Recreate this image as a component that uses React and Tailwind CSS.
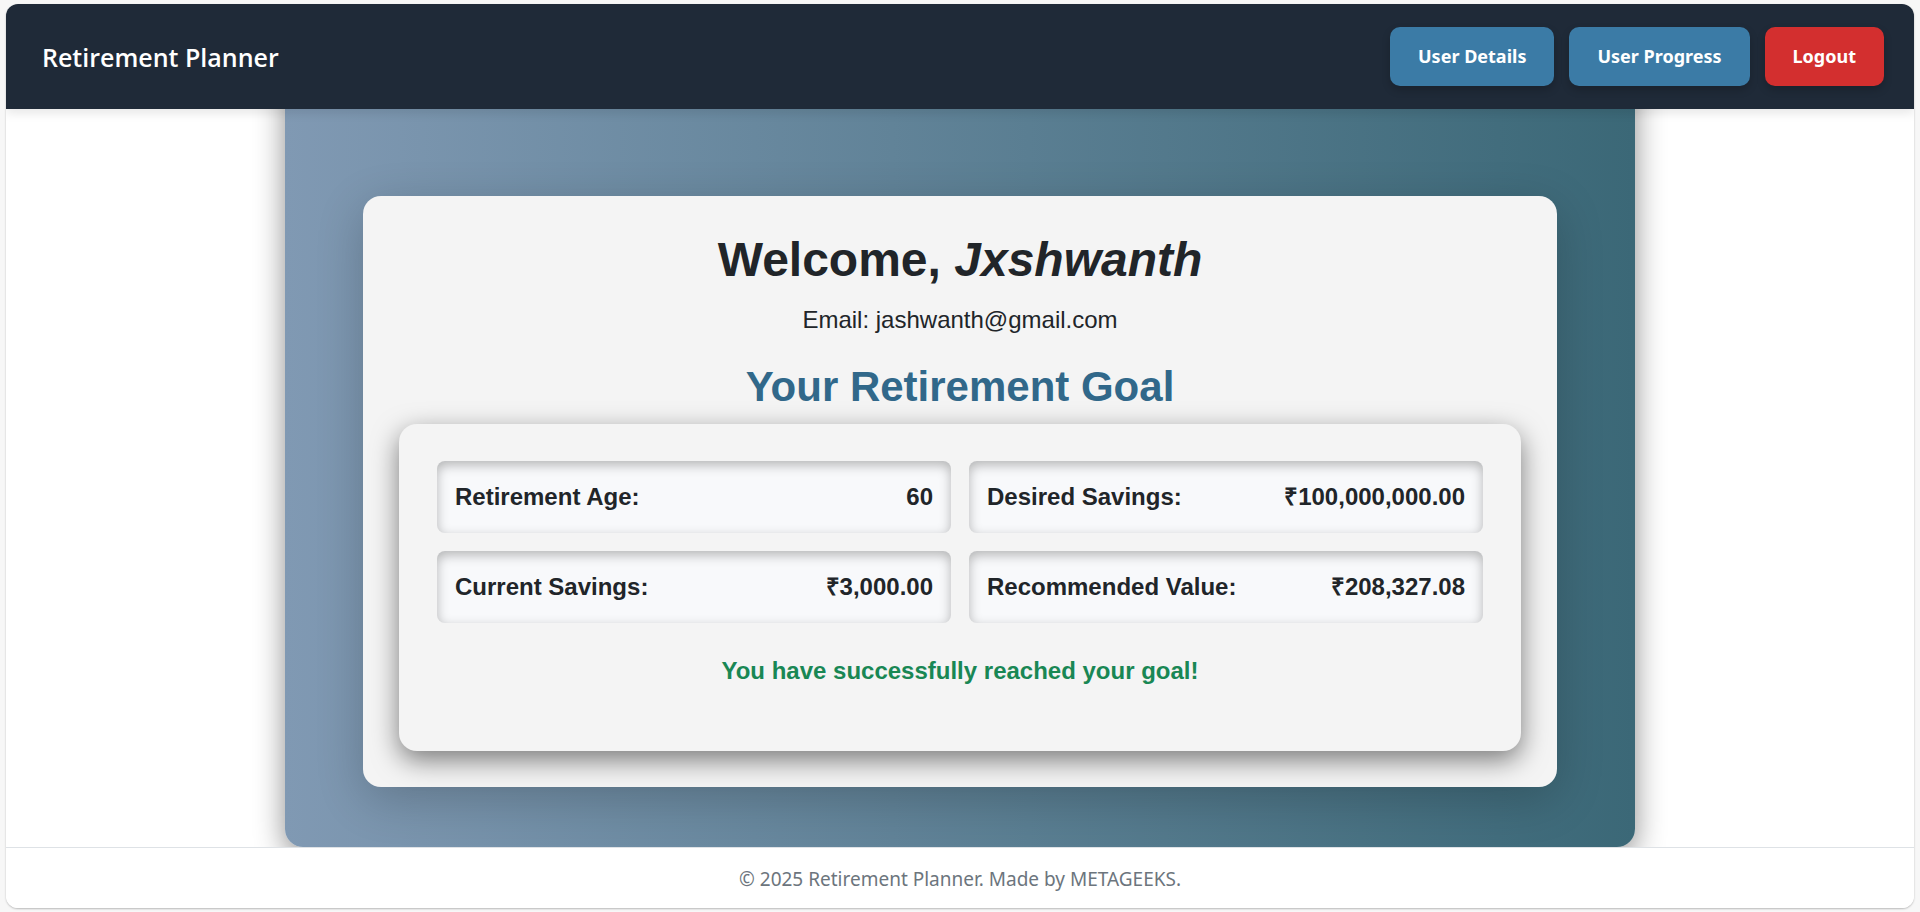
import React from "react";

const goals = [
  { label: "Retirement Age:", value: "60" },
  { label: "Desired Savings:", value: "₹100,000,000.00" },
  { label: "Current Savings:", value: "₹3,000.00" },
  { label: "Recommended Value:", value: "₹208,327.08" },
];

function NavButton({ className, children }) {
  return (
    <button
      type="button"
      className={`rounded-[10px] px-7 py-4 text-[18px] leading-[27px] font-bold text-white shadow-[0_4px_8px_rgba(0,0,0,0.2)] ${className}`}
    >
      {children}
    </button>
  );
}

function Header() {
  return (
    <header className="relative z-10 flex items-center justify-between bg-[#1f2a38] py-[23px] pr-[30px] pl-9 shadow-[0_4px_10px_rgba(0,0,0,0.1)]">
      <div className="font-['Open_Sans','Noto_Sans',sans-serif] text-[25px] leading-8 font-semibold text-white">
        Retirement Planner
      </div>
      <nav className="flex gap-[15px]">
        <NavButton className="bg-[#3b7ba6]">User Details</NavButton>
        <NavButton className="bg-[#3b7ba6]">User Progress</NavButton>
        <NavButton className="bg-[#d32f2f]">Logout</NavButton>
      </nav>
    </header>
  );
}

function GoalCard({ label, value }) {
  return (
    <div className="flex items-center justify-between rounded-lg bg-[#f8f9fb] p-[18px] text-2xl leading-9 font-bold shadow-[inset_0_4px_12px_rgba(0,0,0,0.28)]">
      <dt>{label}</dt>
      <dd>{value}</dd>
    </div>
  );
}

export default function App() {
  return (
    <div className="flex min-h-screen flex-col bg-[#f7f7f7] px-[6px] pt-1 pb-[5px] font-['Noto_Sans','Open_Sans',sans-serif]">
      <div className="flex flex-1 flex-col overflow-hidden rounded-xl bg-white shadow-[0_1px_2px_rgba(0,0,0,0.25)]">
        <Header />
        <main className="-mt-12 flex flex-1 flex-col items-center font-['Liberation_Sans',Arial,sans-serif] text-[#212529]">
          <div className="w-full max-w-[1350px] flex-1 rounded-[18px] bg-linear-[90deg,#8099b3,#3b6877] px-[78px] pt-[135px] pb-[60px] shadow-[0_9px_30px_rgba(0,0,0,0.45)]">
            <section className="rounded-[18px] bg-[#f4f4f4] p-9 text-center shadow-[0_12px_48px_rgba(0,0,0,0.2)]">
              <h1 className="text-5xl leading-14 font-bold">
                Welcome, <em>Jxshwanth</em>
              </h1>
              <p className="mt-3.5 text-2xl leading-9">Email: jashwanth@gmail.com</p>
              <h2 className="mt-6 text-[42px] leading-[50px] font-bold text-[#31688a]">
                Your Retirement Goal
              </h2>
              <div className="mt-3 rounded-[18px] bg-[#f4f4f4] px-[38px] pt-[37px] pb-[62px] shadow-[0_9px_27px_rgba(0,0,0,0.5)]">
                <dl className="grid grid-cols-2 gap-[18px]">
                  {goals.map((goal) => (
                    <GoalCard key={goal.label} label={goal.label} value={goal.value} />
                  ))}
                </dl>
                <p className="mt-[30px] text-2xl leading-9 font-bold text-[#198754]">
                  You have successfully reached your goal!
                </p>
              </div>
            </section>
          </div>
        </main>
        <footer className="relative border-t border-[#dee2e6] bg-white pt-[17px] pb-[15px] text-center text-[19px] leading-7 text-[#6c757d]">
          © 2025 Retirement Planner. Made by METAGEEKS.
        </footer>
      </div>
    </div>
  );
}
